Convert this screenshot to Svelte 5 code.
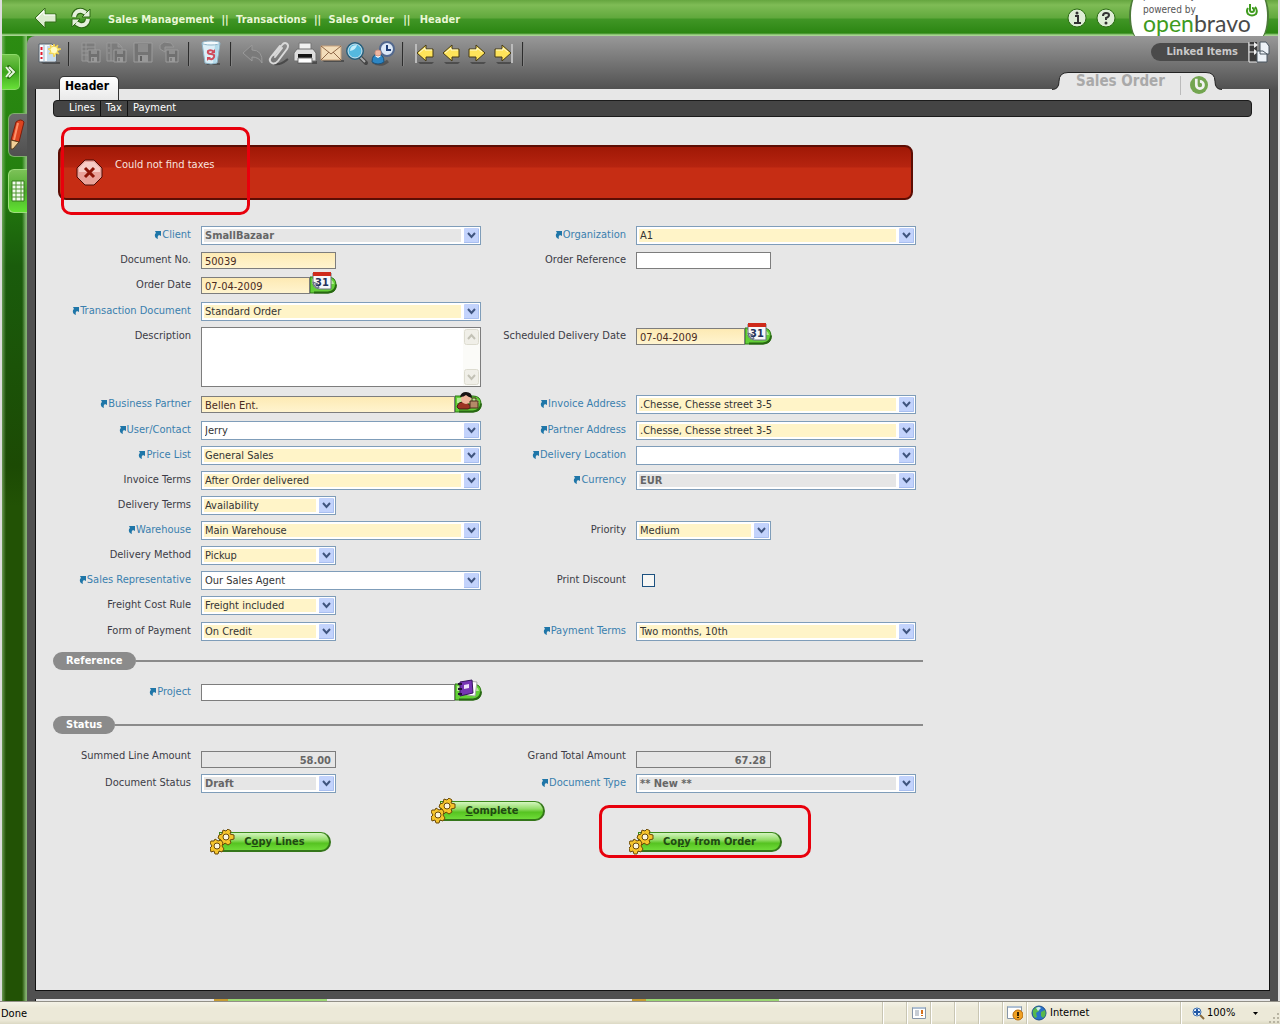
<script>
  const rows = [
    { size: '', cells: [
      { id: 'client', label: 'Client', link: true, kind: 'select', tone: 'off', value: 'SmallBazaar' },
      { id: 'org', label: 'Organization', link: true, kind: 'select', tone: 'req', value: 'A1' } ] },
    { size: '', cells: [
      { id: 'docno', label: 'Document No.', kind: 'text', tone: 'req', short: true, value: '50039' },
      { id: 'oref', label: 'Order Reference', kind: 'text', short: true, value: '' } ] },
    { size: 'wide', cells: [
      { id: 'odate', label: 'Order Date', kind: 'lookup', icon: 'date', tone: 'req', short: true, value: '07-04-2009' }, null ] },
    { size: '', cells: [
      { id: 'tdoc', label: 'Transaction Document', link: true, kind: 'select', tone: 'req', value: 'Standard Order' }, null ] },
    { size: 'tall', cells: [
      { id: 'desc', label: 'Description', kind: 'area', value: '' },
      { id: 'sdate', label: 'Scheduled Delivery Date', kind: 'lookup', icon: 'date', tone: 'req', short: true, value: '07-04-2009' } ] },
    { size: 'wide', cells: [
      { id: 'bp', label: 'Business Partner', link: true, kind: 'lookup', icon: 'partner', tone: 'req', value: 'Bellen Ent.' },
      { id: 'iaddr', label: 'Invoice Address', link: true, kind: 'select', tone: 'req', value: '.Chesse, Chesse street 3-5' } ] },
    { size: '', cells: [
      { id: 'user', label: 'User/Contact', link: true, kind: 'select', value: 'Jerry' },
      { id: 'paddr', label: 'Partner Address', link: true, kind: 'select', tone: 'req', value: '.Chesse, Chesse street 3-5' } ] },
    { size: '', cells: [
      { id: 'price', label: 'Price List', link: true, kind: 'select', tone: 'req', value: 'General Sales' },
      { id: 'dloc', label: 'Delivery Location', link: true, kind: 'select', value: '' } ] },
    { size: '', cells: [
      { id: 'iterms', label: 'Invoice Terms', kind: 'select', tone: 'req', value: 'After Order delivered' },
      { id: 'cur', label: 'Currency', link: true, kind: 'select', tone: 'off', value: 'EUR' } ] },
    { size: '', cells: [
      { id: 'dterms', label: 'Delivery Terms', kind: 'select', tone: 'req', short: true, value: 'Availability' }, null ] },
    { size: '', cells: [
      { id: 'ware', label: 'Warehouse', link: true, kind: 'select', tone: 'req', value: 'Main Warehouse' },
      { id: 'prio', label: 'Priority', kind: 'select', tone: 'req', short: true, value: 'Medium' } ] },
    { size: '', cells: [
      { id: 'dmeth', label: 'Delivery Method', kind: 'select', tone: 'req', short: true, value: 'Pickup' }, null ] },
    { size: '', cells: [
      { id: 'rep', label: 'Sales Representative', link: true, kind: 'select', value: 'Our Sales Agent' },
      { id: 'disc', label: 'Print Discount', kind: 'check' } ] },
    { size: 'wide', cells: [
      { id: 'freight', label: 'Freight Cost Rule', kind: 'select', tone: 'req', short: true, value: 'Freight included' }, null ] },
    { size: '', cells: [
      { id: 'pay', label: 'Form of Payment', kind: 'select', tone: 'req', short: true, value: 'On Credit' },
      { id: 'pterms', label: 'Payment Terms', link: true, kind: 'select', tone: 'req', value: 'Two months, 10th' } ] }
  ];
  const referenceRows = [
    { size: '', cells: [ { id: 'proj', label: 'Project', link: true, kind: 'lookup', icon: 'project', value: '' }, null ] }
  ];
  const statusRows = [
    { size: 'amount', cells: [
      { id: 'sum', label: 'Summed Line Amount', kind: 'text', tone: 'off', short: true, value: '58.00' },
      { id: 'total', label: 'Grand Total Amount', kind: 'text', tone: 'off', short: true, value: '67.28' } ] },
    { size: 'last', cells: [
      { id: 'dstat', label: 'Document Status', kind: 'select', tone: 'off', short: true, value: 'Draft' },
      { id: 'dtype', label: 'Document Type', link: true, kind: 'select', tone: 'off', value: '** New **' } ] }
  ];
  const tools = [
    ['New'], ['Save in grid', 'Save and new', 'Save', 'Save and next'], ['Delete'],
    ['Undo', 'Attach', 'Print', 'Email', 'Search', 'Audit'],
    ['First', 'Previous', 'Next', 'Last']
  ];
</script>

{#snippet icon(name)}
  <svg width="26" height="28" viewBox="0 0 26 28" aria-hidden="true">
    {#if name === 'New'}
      <path d="M5 22h19v2H7z" fill="#333" opacity=".6" />
      <path d="M3 4h13l4 4v14H3z" fill="#f7fafc" stroke="#55616c" />
      <path d="M11 6h6l3 4v11h-9z" fill="#c8dcec" />
      <path d="M8 4v18" stroke="#9db7cb" />
      <path d="M5.500 7v3M5.500 12v3M5.500 17v2" stroke="#e21b2f" stroke-width="2" />
      <path d="M18 4l1 3 3-2-1 3 4 1-4 2 2 3-3-1-2 4-1-4-4 1 2-3-3-2 3-1-1-3 3 2z" fill="#fff27a" stroke="#f0cf50" />
      <circle cx="18" cy="10" r="3" fill="#fffcc8" />
    {:else if name === 'Save in grid' || name === 'Save and new' || name === 'Save and next'}
      <g stroke="#989898" fill="#7c7c7c">
        {#if name === 'Save in grid'}
          <path d="M4 3h13v18H4zM4 7h13M4 11h13M4 15h13M8 3v18" />
        {:else if name === 'Save and new'}
          <path d="M3 3h11l4 4v14H3zM7 3v18M14 3v4h4M4 8h2M4 13h2" />
        {:else}
          <path d="M4 9V5l4-3 7 1 3 4H9v5z" />
        {/if}
        <path d="M10 10h12v12H10z" fill="#707070" stroke="#9c9c9c" />
        <path d="M13 10h6v4h-6z" fill="#8f8f8f" stroke="none" />
        <path d="M13 17h6v5h-6z" fill="#9a9a9a" stroke="none" />
        <path d="M15 18v3" stroke="#606060" />
      </g>
    {:else if name === 'Save'}
      <path d="M4 3h18v19H4z" fill="#747474" stroke="#9c9c9c" />
      <path d="M8 4h10v8H8z" fill="#8c8c8c" />
      <path d="M8 15h10v7H8z" fill="#989898" />
      <path d="M11 16v5" stroke="#606060" stroke-width="2" />
    {:else if name === 'Delete'}
      <path d="M8 23h14v2H9z" fill="#333" opacity=".5" />
      <path d="M4 3l3 20q6 2 12 0l3-20z" fill="#dceff7" stroke="#8db4c8" />
      <path d="M17 5h4l-3 18h-3z" fill="#b3daea" />
      <ellipse cx="13" cy="3" rx="9" ry="2" fill="#f4fafc" stroke="#8db4c8" />
      <path d="M16 12q-3-3-6-1-1 3 3 3 4 0 3 3-2 4-6 1" fill="none" stroke="#cf4a5a" stroke-width="2" />
      <path d="M17 9v4h-4zM9 21v-4h4z" fill="#cf4a5a" />
    {:else if name === 'Undo'}
      <path d="M3 13l9-8v5q11 0 10 13-3-6-10-6v4z" fill="#7a7a7a" stroke="#9a9a9a" />
    {:else if name === 'Attach'}
      <path d="M8 24c7 1 10-2 14-5" fill="none" stroke="#383838" stroke-width="2" opacity=".7" />
      <path d="M8 15l8-10c3-4 8-1 5 4l-9 12c-4 5-11 1-7-4L14 6M9 17l7-9" fill="none" stroke="#d9d9d9" stroke-width="2" stroke-linecap="round" />
    {:else if name === 'Print'}
      <path d="M5 21h20v3H6z" fill="#333" opacity=".6" />
      <path d="M7 3h12v9H7z" fill="#f1f1f1" stroke="#777" />
      <path d="M5 9h16l3 4v8H2v-8z" fill="#dedede" stroke="#707070" />
      <path d="M6 14h14v4H6z" fill="#151515" />
      <path d="M6 18h14v5H6z" fill="#fff" stroke="#777" />
    {:else if name === 'Email'}
      <path d="M4 20h22v2H6z" fill="#333" opacity=".6" />
      <path d="M3 6h20v14H3z" fill="#f3ddba" stroke="#c9a37c" />
      <path d="M3 6l10 8L23 6M3 20l8-8M23 20l-8-8" fill="none" stroke="#8f6849" />
    {:else if name === 'Search'}
      <path d="M16 17l6 6" stroke="#444" stroke-width="4" stroke-linecap="round" />
      <path d="M15 16l6 6" stroke="#aaa" stroke-width="2" />
      <circle cx="11" cy="11" r="8" fill="#55b9df" stroke="#285f7c" stroke-width="2" />
      <circle cx="11" cy="11" r="7" fill="none" stroke="#cfeaf5" />
      <path d="M6 11q0-6 7-6-1 5-7 6z" fill="#c4edfa" />
    {:else if name === 'Audit'}
      <path d="M3 22q8 5 15-1" stroke="#333" stroke-width="3" fill="none" opacity=".5" />
      <circle cx="17" cy="9" r="7" fill="#dce8f7" stroke="#52688e" stroke-width="2" />
      <path d="M17 5v5h4" fill="none" stroke="#203f78" stroke-width="2" />
      <path d="M2 22q0-8 6-8t6 8q-6 4-12 0z" fill="#2d86c4" stroke="#1c527b" />
      <path d="M5 16q3-2 6 0l-3 2z" fill="#fff" />
      <circle cx="8" cy="13" r="3" fill="#efb7a1" stroke="#d09482" />
    {:else}
      <path d="M6 22h16l-2 2H8z" fill="#333" opacity=".6" />
      {#if name === 'First' || name === 'Previous'}
        {#if name === 'First'}<path d="M4 4v19" stroke="#bbb" stroke-width="2" />{/if}
        <path d="M5 13l9-8v4h7v8h-7v4z" fill="#ffe45a" stroke="#463b17" />
        <path d="M7 13l6-5v2h7" fill="none" stroke="#fffbd0" />
      {:else}
        {#if name === 'Last'}<path d="M22 4v19" stroke="#bbb" stroke-width="2" />{/if}
        <path d="M21 13l-9-8v4H5v8h7v4z" fill="#ffe45a" stroke="#463b17" />
        <path d="M6 10h7V8l5 4" fill="none" stroke="#fffbd0" />
      {/if}
    {/if}
  </svg>
{/snippet}

{#snippet bmark()}
  <svg width="18" height="18" viewBox="0 0 20 20" aria-hidden="true">
    <circle cx="10" cy="10" r="10" fill="#73a550" />
    <path d="M7 3v7a4 4 0 1 0 4-4" fill="none" stroke="#f2f2f2" stroke-width="3" />
  </svg>
{/snippet}

{#snippet bglyph()}
  <svg width="12" height="13" viewBox="0 0 12 13" aria-hidden="true">
    <path d="M4 0v6a2 2 0 1 0 2-2M2 4q-2 3 0 6 4 3 8 0 2-4-1-7" fill="none" stroke="#3f9b1e" stroke-width="2" />
  </svg>
{/snippet}

{#snippet lookupIcon(name)}
  <svg width="27" height="22" viewBox="0 0 27 22" aria-hidden="true">
    <path d="M0 5h18q8 0 8 8 0 8-8 8H0z" fill="#63cf37" stroke="#2d7416" />
    <path d="M2 7h15q6 0 7 5H2z" fill="#b5ec94" />
    <path d="M4 20.500h14q8-1 8-8" fill="none" stroke="#286713" stroke-width="2" />
    {#if name === 'date'}
      <path d="M3 1h18v16H9q-6-1-6-6z" fill="#f7f8fa" stroke="#6d7480" />
      <path d="M3 0h18v4H3z" fill="#cf2a1b" />
      <path d="M3 10q1 6 6 6l-1-4z" fill="#b9c2d8" stroke="#626b80" />
      <text x="5" y="14" class="cal">31</text>
    {:else if name === 'partner'}
      <path d="M2 16q1-6 9-5l6 5-4 2H4z" fill="#9c3423" stroke="#431b12" />
      <circle cx="11" cy="8" r="5" fill="#efb59b" />
      <path d="M5 6Q6 1 11 1q6 0 6 6-4-1-6-3-2 2-6 2z" fill="#171313" />
      <path d="M15 10h8v7h-8z" fill="#b58a68" stroke="#4d301c" />
      <path d="M17 10V7h4v3" fill="none" stroke="#4d301c" />
    {:else}
      <path d="M13 2l9 1-2 14-8-1z" fill="#fff" stroke="#aaa" />
      <path d="M5 3l12-2 1 13-13 3z" fill="#7635b4" stroke="#35145f" />
      <path d="M9 6l5-1v4l-5 1z" fill="#eee0fa" />
      <path d="M3 5h4M3 10h4M3 15h4" stroke="#241036" stroke-width="2" />
    {/if}
  </svg>
{/snippet}

{#snippet control(f)}
  {#if f.kind === 'select'}
    <span class={['select', f.tone, f.short && 'short']}>
      <select id={f.id}><option>{f.value}</option></select>
      <svg width="15" height="15" viewBox="0 0 15 15" aria-hidden="true">
        <rect width="15" height="15" rx="1" fill="#c3d3fc" />
        <path d="M0 14.500h14.500V1" fill="none" stroke="#a9bff0" />
        <path d="M4 5l3.500 4L11 5" fill="none" stroke="#40557f" stroke-width="2" />
      </svg>
    </span>
  {:else if f.kind === 'text'}
    <input type="text" id={f.id} class={['box', f.tone, f.short && 'short']} value={f.value} />
  {:else if f.kind === 'lookup'}
    <span class={['lookup', f.short && 'short']}>
      <input type="text" id={f.id} class={['box', f.tone]} value={f.value} />
      <button type="button" aria-label={'Choose ' + f.label}>{@render lookupIcon(f.icon)}</button>
    </span>
  {:else if f.kind === 'area'}
    <span class="area">
      <textarea id={f.id}></textarea>
      <span class="scroll" aria-hidden="true">
        <svg width="15" height="16" viewBox="0 0 15 16"><rect x=".5" y=".5" width="14" height="15" rx="2" fill="#f0efe8" stroke="#dddcd0" /><path d="M4 10l3.500-4 3.500 4" fill="none" stroke="#c3c2b6" stroke-width="2" /></svg>
        <svg width="15" height="16" viewBox="0 0 15 16"><rect x=".5" y=".5" width="14" height="15" rx="2" fill="#f0efe8" stroke="#dddcd0" /><path d="M4 6l3.500 4L11 6" fill="none" stroke="#c3c2b6" stroke-width="2" /></svg>
      </span>
    </span>
  {:else}
    <input type="checkbox" id={f.id} class="check" />
  {/if}
{/snippet}

{#snippet fieldRows(list)}
  <div class="fields">
    {#each list as row}
      <div class={['row', row.size]}>
        {#each row.cells as f}
          {#if f}
            <label for={f.id}>
              {#if f.link}
                <a href={'#' + f.id}><svg width="7" height="8" viewBox="0 0 7 8" aria-hidden="true"><path d="M1 0h6v5L5 4Q3 5 4 8 0 7 1 3l1-1z" fill="#1f76a8" /></svg>{f.label}</a>
              {:else}{f.label}{/if}
            </label>
            <div class="control">{@render control(f)}</div>
          {/if}
        {/each}
      </div>
    {/each}
  </div>
{/snippet}

{#snippet gears()}
  <svg class="gears" width="25" height="26" viewBox="0 0 25 26" aria-hidden="true">
    <g fill="#f5c42c" stroke="#6b4a08">
      <path d="M13 1l3 1 2-2 3 2-1 3 4 1v4l-4 1 1 3-3 2-3-2-2 2-3-2 1-3-3-2 1-3 3-1z" />
      <circle cx="16" cy="8" r="3" fill="#fbf6df" />
      <path d="M5 10l3 2 3-1 2 3-1 3 2 3-2 3-3-1-1 3H5l-1-3-3 1-1-4 2-2-2-3 1-2h3z" />
      <circle cx="7" cy="17" r="3" fill="#fbf6df" />
    </g>
  </svg>
{/snippet}

<div class="page">
  <header class="top">
    <div class="nav">
      <button type="button" aria-label="Back">
        <svg width="24" height="22" viewBox="0 0 24 22" aria-hidden="true"><path d="M1 11l10-10v6h11v8H11v6z" fill="#dceccf" stroke="#356d1b" /><path d="M3 11l7-7v4h11" fill="none" stroke="#fff" /></svg>
      </button>
      <button type="button" aria-label="Refresh">
        <svg width="22" height="22" viewBox="0 0 22 22" aria-hidden="true">
          <g fill="none" stroke="#2d6815" stroke-width="6"><path d="M4 10q1-7 8-6l4 2M18 12q-1 7-8 6l-4-2" /></g>
          <path d="M20 2v8h-8zM2 20v-8h8z" fill="#e5f1dc" stroke="#2d6815" />
          <g fill="none" stroke="#e5f1dc" stroke-width="4"><path d="M4 10q1-7 8-6l4 2M18 12q-1 7-8 6l-4-2" /></g>
        </svg>
      </button>
    </div>
    <nav class="crumbs" aria-label="Breadcrumb">
      <a href="#sm">Sales Management</a><span>||</span><a href="#tr">Transactions</a><span>||</span><a href="#so">Sales Order</a><span class="far">||</span><a href="#he">Header</a>
    </nav>
    <div class="help">
      <button type="button" aria-label="About">
        <svg width="20" height="20" viewBox="0 0 20 20" aria-hidden="true"><circle cx="10" cy="10" r="9" fill="#dfeed7" stroke="#2c6c14" /><path d="M8 8h3v7M7 15h7" fill="none" stroke="#333" stroke-width="2" /><circle cx="10" cy="5" r="1.500" fill="#333" /></svg>
      </button>
      <button type="button" aria-label="Help">
        <svg width="20" height="20" viewBox="0 0 20 20" aria-hidden="true"><circle cx="10" cy="10" r="9" fill="#dfeed7" stroke="#2c6c14" /><path d="M7 8q0-3 3-3t3 2q0 2-3 3v2" fill="none" stroke="#333" stroke-width="2" /><circle cx="10" cy="15" r="1.500" fill="#333" /></svg>
      </button>
    </div>
    <div class="brand">
      <div class="cut">powered by</div>
      <div class="powered">powered by <span>{@render bglyph()}</span></div>
      <div class="name"><b>open</b>bravo</div>
    </div>
  </header>

  <div class="body">
    <aside class="side">
      <button type="button" class="expand" aria-label="Expand menu">
        <svg width="14" height="14" viewBox="0 0 14 14" aria-hidden="true"><path d="M3 1l6 6-6 6" fill="none" stroke="#2c7610" stroke-width="5" /><path d="M2 2l4 5-4 5M5 2l5 5-5 5" fill="none" stroke="#e7f7de" stroke-width="2" /></svg>
      </button>
      <button type="button" class="edit" aria-label="Form view">
        <svg width="18" height="34" viewBox="0 0 18 34" aria-hidden="true"><path d="M7 4q5-4 8 0l-5 20-8-2z" fill="#dc4420" stroke="#7d1d0b" /><path d="M9 5l-4 17" stroke="#ff9068" stroke-width="2" /><path d="M2 22l8 2-6 7-2 0z" fill="#f1cf98" stroke="#5b3c1a" /></svg>
      </button>
      <button type="button" class="grid" aria-label="Grid view">
        <svg width="14" height="22" viewBox="0 0 14 22" aria-hidden="true"><path d="M1 1h12v20H1z" fill="#f2faed" stroke="#357c1b" /><path d="M5 1v20M10 1v20M1 5h12M1 9h12M1 13h12M1 17h12" stroke="#4e9631" /></svg>
      </button>
    </aside>

    <div class="frame">
      <div class="toolbar">
        {#each tools as group}
          {#each group as name}
            <button type="button" aria-label={name}>{@render icon(name)}</button>
          {/each}
          <i class="sep"></i>
        {/each}
        <button type="button" class="linked"><span>Linked Items</span>
          <svg width="22" height="24" viewBox="0 0 22 24" aria-hidden="true"><path d="M1 2h8v20H1z" fill="#3c3c3c" /><path d="M1 2v20h8M1 5h6M1 12h6" fill="none" stroke="#eee" /><path d="M6 2l4 3-4 3M6 9l4 3-4 3" fill="#eee" /><path d="M12 2h6l3 4v8h-9zM9 11h6l4 3v8H9z" fill="#edf2f7" stroke="#4a5661" /></svg>
        </button>
      </div>

      <main class="panel">
        <div class="tabs">
          <a class="tab" href="#header">Header</a>
          <div class="title">
            <svg class="shape" width="170" height="20" viewBox="0 0 170 20" aria-hidden="true"><path d="M0 17.500q7 0 7-8 0-9 9-9h138q9 0 9 9 0 8 7 8V20H0z" fill="#e7e7e7" /><path d="M0 17.500q7 0 7-8 0-9 9-9h138q9 0 9 9 0 8 7 8" fill="none" stroke="#222" /></svg>
            <h1>Sales Order</h1>
            <span class="mark">{@render bmark()}</span>
          </div>
        </div>
        <nav class="subtabs" aria-label="Tabs">
          <a href="#lines">Lines</a><a href="#tax">Tax</a><a href="#payment">Payment</a>
        </nav>

        <form class="form">
          <div class="alert" role="alert">
            <svg width="27" height="27" viewBox="0 0 27 27" aria-hidden="true"><path d="M9 1h9l8 8v9l-8 8H9l-8-8V9z" fill="#e9a29a" stroke="#4d0b05" /><path d="M9 3h9l6 6v4H3V9z" fill="#f6cdc7" /><path d="M9 9l9 9M18 9l-9 9" stroke="#8c1407" stroke-width="3" /></svg>
            <p>Could not find taxes</p>
            <i class="note"></i>
          </div>
          {@render fieldRows(rows)}
          <h2><span>Reference</span></h2>
          {@render fieldRows(referenceRows)}
          <h2 class="second"><span>Status</span></h2>
          {@render fieldRows(statusRows)}
          <div class="actions">
            <button type="button" class="act full">{@render gears()}<span><u>C</u>omplete</span></button>
            <button type="button" class="act">{@render gears()}<span>C<u>o</u>py Lines</span></button>
            <div class="flagged">
              <button type="button" class="act">{@render gears()}<span>Co<u>p</u>y from Order</span></button>
              <i class="note"></i>
            </div>
          </div>
        </form>
      </main>
      <div class="ghost"><i></i><i></i></div>
    </div>
  </div>

  <footer class="status">
    <span class="done">Done</span>
    <span class="cell"></span>
    <span class="cell"><svg width="14" height="14" viewBox="0 0 14 14" aria-hidden="true"><path d="M.5 1.500h13v11H.5z" fill="#fff" stroke="#8796a8" /><path d="M1 2h12" stroke="#aebfd2" stroke-width="2" /><path d="M3 5h4M3 7h4M3 9h4" stroke="#8e9aa8" /><path d="M10 4v4M10 9v1" stroke="#d5701c" stroke-width="2" /></svg></span>
    <span class="cell"></span><span class="cell"></span><span class="cell"></span>
    <span class="cell"><svg width="16" height="16" viewBox="0 0 16 16" aria-hidden="true"><path d="M.5 1.500h14v12H.5z" fill="#fff" stroke="#8796a8" /><path d="M1 2h13" stroke="#aebfd2" stroke-width="2" /><circle cx="11" cy="10" r="5" fill="#f0a022" stroke="#b56a0a" /><path d="M11 7v4M11 12v1" stroke="#3a2503" stroke-width="2" /></svg></span>
    <span class="cell zone"><svg width="16" height="16" viewBox="0 0 16 16" aria-hidden="true"><circle cx="8" cy="8" r="7" fill="#2a72c8" stroke="#1b4c8b" /><path d="M2 5q3-4 7-3l-1 4-3 2 1 4-2 1q-3-3-2-8zM10 7l4-2q2 5-2 8l-2-2z" fill="#58b94a" /><path d="M5 3q3-2 5 0L7 6z" fill="#cfe9f2" /></svg>Internet</span>
    <span class="cell zoom"><svg width="13" height="13" viewBox="0 0 13 13" aria-hidden="true"><path d="M8 8l4 4" stroke="#8a6a3c" stroke-width="2" /><circle cx="5" cy="5" r="4" fill="#e6f1fb" stroke="#3d6fb0" /><path d="M5 2v6M2 5h6" stroke="#2259a6" stroke-width="2" /></svg>100%<svg class="drop" width="5" height="3" viewBox="0 0 5 3" aria-hidden="true"><path d="M0 0h5L2.500 3z" /></svg>
      <svg class="grip" width="11" height="11" viewBox="0 0 11 11" aria-hidden="true"><path d="M8 0h2v2H8zM8 4h2v2H8zM8 8h2v2H8zM4 4h2v2H4zM4 8h2v2H4zM0 8h2v2H0z" fill="#b8b4a2" /></svg></span>
  </footer>
</div>

<style>
  :global(body) { margin: 0; background: #ddd; }
  .page, .page * { box-sizing: border-box; }
  .page {
    min-height: 100vh; display: flex; flex-direction: column;
    font: 11px/17px "DejaVu Sans Condensed", "Noto Sans", sans-serif; color: #3c3c46;
  }
  button { border: 0; padding: 0; background: none; font: inherit; color: inherit; cursor: pointer; }
  a { color: inherit; text-decoration: none; }
  svg { display: block; flex: none; }

  .top {
    height: 36px; display: flex; align-items: center; overflow: hidden;
    margin: 0 2px; padding-left: 32px; padding-right: 9px;
    background: linear-gradient(#65a53f 0, #7fbc56 5px, #60a83c 18px, #419626 19px, #2c8612 33px, #a8d592 35px, #a8d592 36px);
  }
  .nav { display: flex; gap: 12px; }
  .crumbs { display: flex; margin-left: 16px; font-weight: bold; color: #eaf7d5; white-space: nowrap; padding-top: 2px; }
  .crumbs span { width: 10px; margin: 0 6px; text-align: center; }
  .crumbs .far { margin: 0 8px; }
  .help { display: flex; gap: 9px; margin-left: auto; }
  .brand {
    width: 140px; height: 46px; margin: -4px 0 0 13px; padding: 0 12px;
    background: #fff; border: solid #4b7a38; border-width: 0 2px; border-radius: 16px / 36px;
    font-size: 10px; line-height: 12px; color: #555;
  }
  .cut { height: 9px; line-height: 6px; }
  .powered { display: flex; justify-content: space-between; padding-top: 2px; }
  .powered span { margin-right: -3px; }
  .name { font: 23px/18px Lato, sans-serif; color: #4a4a4a; margin-top: -3px; }
  .name b { font-weight: normal; color: #3f9b1e; }

  .body { flex: 1; display: flex; margin: 0 2px; background: #2c8c12; }
  .side {
    width: 25px; display: flex; flex-direction: column; align-items: flex-end; padding-top: 18px;
    background:
      linear-gradient(90deg, #9cc98a99 0, #9cc98a00 4px, #9cc98a00 20px, #9cc98acc 24px, #9cc98acc 25px),
      linear-gradient(#2c8c12 0, #24800f 140px, #1a5c0c 230px, #1c4a04 430px, #225205 470px);
  }
  .side button { display: grid; place-items: center; }
  .side .expand { width: 18px; height: 36px; align-self: flex-start; border-radius: 0 5px 5px 0; background: linear-gradient(#74c44c, #3da51c 50%, #68e038); border: 1px solid #8ddb69; border-left: 0; }
  .side .edit { width: 19px; height: 44px; margin-top: 23px; border-radius: 6px 0 0 6px; background: linear-gradient(#6b6b6b, #505050); border: 1px solid #7fae6c; border-right: 0; }
  .side .grid { width: 19px; height: 44px; margin-top: 12px; border-radius: 6px 0 0 6px; background: linear-gradient(#7cc158, #4cab2c 50%, #62e332); border: 1px solid #9ede7d; border-right: 0; }

  .frame {
    flex: 1; min-width: 0; display: flex; flex-direction: column; padding: 0 8px 0 8px;
    border-radius: 8px 0 0 0; background: linear-gradient(#989898 0, #505050 54px);
  }
  .toolbar { display: flex; align-items: flex-start; height: 53px; padding-top: 4px; padding-left: 1px; }
  .sep { width: 2px; height: 24px; margin: 2px 8px 2px 6px; background: #2d2d2d; border-right: 1px solid #858585; }
  .linked { display: flex; align-items: center; margin-left: auto; font-weight: bold; color: #c9c9c9; }
  .linked span { background: #4a4a4a; border-radius: 9px 0 0 9px; padding: 0 10px 1px 15px; white-space: nowrap; }

  .panel { flex: 1; background: #e7e7e7; border: 1px solid #111; border-top: 0; padding: 0 17px 8px; }
  .tabs { display: flex; justify-content: space-between; align-items: flex-start; height: 28px; margin-top: -17px; }
  .tab {
    height: 24px; margin: 4px 0 0 6px; padding: 1px 9px 0 5px; font-size: 12px; font-weight: bold; color: #000;
    background: linear-gradient(#fff, #e9e9e9); border: 1px solid #333; border-bottom: 0; border-radius: 5px 5px 0 0;
  }
  .title { position: relative; display: flex; width: 170px; height: 28px; margin-right: 30px; padding-left: 24px; }
  .shape { position: absolute; left: 0; top: 0; }
  h1 { position: relative; margin: 0; font-size: 15px; line-height: 18px; color: #a9a9a9; white-space: nowrap; }
  .mark { position: relative; margin: 4px 14px 0 auto; height: 19px; padding-left: 9px; border-left: 1px solid #bbb; }
  .subtabs { display: flex; height: 17px; background: #444; border: 1px solid #1b1b1b; border-radius: 4px; padding-left: 10px; color: #fff; line-height: 13px; }
  .subtabs a { padding: 0 5px; }
  .subtabs a + a { border-left: 1px solid #111; }

  .form { max-width: 870px; }
  .alert {
    position: relative; display: flex; height: 55px; margin: 28px 10px 26px 5px; padding: 12px 16px;
    background: linear-gradient(#a01806 0, #b62410 20px, #c62d14 21px); border: 2px solid #5c0d04; border-radius: 8px; color: #fbe3df;
  }
  .alert p { margin: -3px 0 0 12px; }
  .note { position: absolute; border: 3px solid #e8000c; border-radius: 10px; pointer-events: none; }
  .alert .note { left: 1px; top: -20px; width: 189px; height: 88px; }

  .row { display: grid; grid-template-columns: 138fr 280fr 135fr 280fr; column-gap: 10px; min-height: 25px; margin-right: 7px; align-items: start; }
  .row.wide { min-height: 26px; }
  .row.tall { min-height: 68px; }
  .row.amount { min-height: 27px; }
  .row.last { min-height: 24px; }
  .row.amount .box { margin-top: 4px; }
  label { text-align: right; white-space: nowrap; }
  label a { display: inline-flex; align-items: center; gap: 1px; color: #3a7fae; }
  .control { display: flex; min-width: 0; }
  .select { flex: 1; display: grid; grid-template-columns: 1fr 15px; height: 19px; padding: 1px; border: 1px solid #7f9db9; background: #fff; }
  .short { flex: none; width: 135px; }
  select {
    grid-column: 1 / 3; grid-row: 1; appearance: none; border: 0; border-radius: 0; margin: 0; padding: 1px 18px 0 2px; height: 15px; min-width: 0;
    font: inherit; line-height: 14px; color: #333; background: #fff;
  }
  .select svg { grid-column: 2; grid-row: 1; pointer-events: none; }
  .req select { background: linear-gradient(#fff4c8, #fff4c8) 1px 1px / calc(100% - 19px) 13px no-repeat; }
  .off select { background: linear-gradient(#e6e6e6, #e6e6e6) 1px 1px / calc(100% - 19px) 13px no-repeat; font-weight: bold; color: #666; }
  .box { flex: 1; min-width: 0; height: 17px; margin: 1px 0 0; padding: 1px 4px 0 3px; border: 1px solid #7d7d7d; border-radius: 0; background: #fff; font: inherit; line-height: 14px; color: #333; }
  .box.short { flex: none; }
  .box.req { background: linear-gradient(#fdeab4, #fff4cf); color: #4a2b22; }
  .box.off { background: #e6e6e6; font-weight: bold; color: #666; text-align: right; }
  .lookup { flex: 1; display: flex; align-items: flex-end; margin-top: -4px; margin-right: -1px; }
  .lookup.short { flex: none; width: 136px; }
  .area { flex: 1; display: flex; height: 60px; border: 1px solid #7d7d7d; background: #fff; }
  textarea { flex: 1; min-width: 0; border: 0; resize: none; font: inherit; background: none; overflow: hidden; }
  .scroll { display: flex; flex-direction: column; justify-content: space-between; padding: 1px; background: #fbfbf8; }
  .check { appearance: none; width: 13px; height: 13px; margin: 3px 0 0 6px; border: 1px solid #1c5180; background: #f6f6f4; }
  .cal { font: bold 11px "DejaVu Sans Condensed", sans-serif; fill: #26345c; }

  h2 { display: flex; align-items: center; margin: 5px 0 13px; font-size: 11px; line-height: 18px; color: #fff; }
  h2.second { margin-top: 8px; }
  h2 span { padding: 0 13px; border-radius: 9px; background: #8b8b8b; }
  h2::after { content: ""; flex: 1; height: 2px; background: #8b8b8b; }

  .actions { display: grid; grid-template-columns: 1fr 1fr; justify-items: center; row-gap: 5px; }
  .act { display: flex; align-items: center; height: 26px; font-weight: bold; color: #1f4a12; }
  .act.full { grid-column: 1 / 3; }
  .act span {
    height: 20px; line-height: 18px; margin-left: -16px; padding: 0 24px; white-space: nowrap;
    border: 1px solid #3c8a1c; border-bottom: 2px solid #34761a; border-right: 2px solid #34761a; border-radius: 0 10px 10px 0;
    background: linear-gradient(#d4f5bf 0, #93dd68 40%, #56c321 60%, #6fdc38);
  }
  .gears { position: relative; }
  .flagged { position: relative; }
  .flagged .note { left: -30px; right: -29px; top: -24px; height: 53px; }

  .ghost { display: grid; grid-template-columns: minmax(0, 435px) minmax(0, 435px); height: 2px; margin: 8px 0 0; padding-left: 17px; background: #e7e7e7; border-left: 1px solid #111; }
  .ghost i { justify-self: center; width: 113px; background: linear-gradient(90deg, #c59a32 14px, #9ad672 14px); }
  .ghost i + i { width: 147px; }

  .status { display: flex; height: 23px; background: linear-gradient(#f4f2e6, #ece9d8 6px, #ece9d8 18px, #dcd9c4); border-top: 1px solid #929087; color: #000; line-height: 24px; }
  .done { flex: 1; padding-left: 1px; }
  .cell { width: 24px; display: flex; align-items: center; justify-content: center; border-left: 1px solid #c9c6b3; box-shadow: inset 1px 0 #fff; }
  .cell.zone { width: 154px; justify-content: flex-start; gap: 3px; padding-left: 4px; }
  .cell.zoom { width: 100px; justify-content: flex-start; gap: 2px; padding-left: 11px; }
  .drop { margin-left: auto; margin-right: 9px; }
  .grip { align-self: flex-end; }
</style>
